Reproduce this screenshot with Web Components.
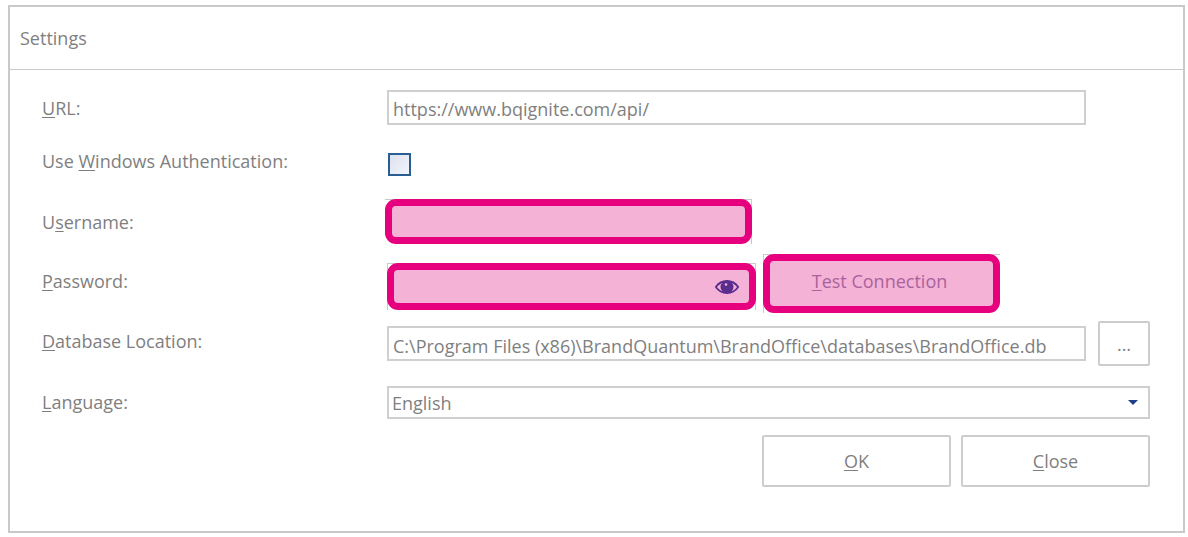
<!DOCTYPE html>
<html lang="en"><head><meta charset="utf-8"><title>Settings</title>
<style>
html,body{margin:0;background:#fff;overflow:hidden}
body{font:18px "Open Sans","Noto Sans",sans-serif;color:#7f7f7f}
u{text-underline-offset:2px;text-decoration-thickness:1px}
</style></head><body>
<template id="t-dialog"><style>
:host{display:block;box-sizing:border-box;width:1177px;height:528px;margin:5px 0 0 8px;border:2px solid #c9c9c9;background:#fff}
header{box-sizing:border-box;height:63px;border-bottom:1px solid #c9c9c9;padding:18px 0 0 10px;line-height:26px}
main{padding:20px 33px 0 32px;display:flex;flex-direction:column}
</style><header><slot name="title"></slot></header><main><slot></slot></main></template>

<template id="t-row"><style>
:host{display:grid;grid-template-columns:345px 1fr;grid-template-rows:100%;align-items:center;height:var(--h);margin-top:var(--gap,0)}
.l{line-height:24px;transform:translateY(var(--shift,0))}
.c{display:flex;align-items:center;gap:var(--cgap,12px);height:100%}
</style><div class="l"><slot name="label"></slot></div><div class="c"><slot></slot></div></template>

<template id="t-field"><style>
:host{display:block;box-sizing:border-box;flex:none;width:699px;height:35px;border:2px solid #cfcfcf;background:#fff;padding:var(--ftop,2px) 4px 0;line-height:31px;white-space:nowrap;overflow:hidden}
</style><slot></slot></template>

<template id="t-check"><style>
:host{display:block;box-sizing:border-box;width:23px;height:23px;margin:0 0 0 1px;border:2px solid #2a5d92;background:linear-gradient(135deg,#dbe1ee,#f2f5fa)}
</style></template>

<template id="t-select"><style>
:host{display:flex;align-items:center;justify-content:space-between;box-sizing:border-box;flex:1;height:33px;border:2px solid #cfcfcf;padding:1px 10px 0 3px;line-height:29px}
svg{display:block;margin-top:-2px}
</style><slot></slot><svg width="10" height="5" viewBox="0 0 10 5"><path d="M0 0h10L5 5z" fill="#1f3f8c"/></svg></template>

<template id="t-button"><style>
:host{display:flex;align-items:center;justify-content:center;box-sizing:border-box;flex:none;width:var(--w);height:var(--bh);border:2px solid #cdcdcd;border-radius:2px;background:#fff;line-height:24px}
</style><slot></slot></template>

<template id="t-mark"><style>
:host{display:block;position:relative;flex:none;width:var(--w);height:var(--mh)}
.over{position:absolute;inset:var(--inset,0);box-sizing:border-box;border:7px solid #e6007e;border-radius:11px;background:#f5b2d7;display:flex;align-items:center;justify-content:flex-end;color:#a8639c}
.under{position:absolute;inset:var(--inset,0);box-sizing:border-box;border:solid #c9c9c9;border-width:var(--ub,0)}
</style><div class="under"></div><div class="over"><slot></slot></div></template>

<x-dialog>
  <span slot="title">Settings</span>
  <x-row style="--h:35px"><span slot="label"><u>U</u>RL:</span><x-field>https://www.bqignite.com/api/</x-field></x-row>
  <x-row style="--h:23px;--gap:28px;--shift:-4px"><span slot="label">Use <u>W</u>indows Authentication:</span><x-check></x-check></x-row>
  <x-row style="--h:45px;--gap:23px;--shift:0px"><span slot="label">U<u>s</u>ername:</span><x-mark style="--w:365px;--mh:45px;--inset:0 0 0 -2px;--ub:1px 1px 0 0"></x-mark></x-row>
  <x-row style="--h:59px;--gap:10px;--cgap:7px;--shift:-3px"><span slot="label"><u>P</u>assword:</span>
    <x-mark style="--w:369px;--mh:59px;--inset:9px 0 3px 0;--ub:1px 1px 0 1px">
      <svg width="24" height="14" viewBox="0 0 24 14" style="margin-right:10px"><path d="M.8 7C4 2.500 8 1 12 1S20 2.500 23.200 7C20 11.500 16 13 12 13S4 11.500 .8 7Z" fill="none" stroke="#5a2d8f" stroke-width="1.800"/><circle cx="12" cy="7" r="6.500" fill="#5a2d8f"/><circle cx="11" cy="4.500" r="1.300" fill="#f5b2d7"/></svg>
    </x-mark>
    <x-mark style="--w:237px;--mh:59px;--ub:1px 0 0 1px"><span style="flex:1;text-align:center;padding:0 4px 5px 0"><u>T</u>est Connection</span></x-mark>
  </x-row>
  <x-row style="--h:45px;--gap:8px;--shift:-3px"><span slot="label"><u>D</u>atabase Location:</span><x-field style="--ftop:3px">C:\Program Files (x86)\BrandQuantum\BrandOffice\databases\BrandOffice.db</x-field><x-button style="--w:52px;--bh:45px">...</x-button></x-row>
  <x-row style="--h:33px;--gap:20px;--shift:-1px"><span slot="label"><u>L</u>anguage:</span><x-select>English</x-select></x-row>
  <x-row style="--h:52px;--gap:16px;--cgap:10px"><span slot="label"></span><span style="flex:1"></span><x-button style="--w:189px;--bh:52px"><span><u>O</u>K</span></x-button><x-button style="--w:189px;--bh:52px"><span><u>C</u>lose</span></x-button></x-row>
</x-dialog>
<script>
for (const [n,t] of [['x-dialog','t-dialog'],['x-row','t-row'],['x-field','t-field'],['x-check','t-check'],['x-select','t-select'],['x-button','t-button'],['x-mark','t-mark']]) {
  customElements.define(n, class extends HTMLElement {
    constructor(){super();this.attachShadow({mode:'open'}).append(document.getElementById(t).content.cloneNode(true));}
  });
}
</script>
</body></html>
